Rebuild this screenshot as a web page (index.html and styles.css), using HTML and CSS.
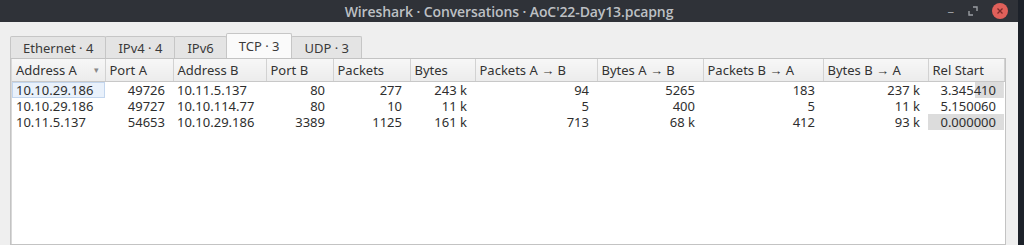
FILE: index.html
```html
<!DOCTYPE html>
<html lang="en">
<head>
  <meta charset="UTF-8">
  <title>Wireshark · Conversations · AoC'22-Day13.pcapng</title>
  <link rel="stylesheet" href="styles.css">
</head>
<body>

<div class="screen">
  <div class="window">
    <div class="titlebar">
      <span class="title">Wireshark · Conversations · AoC'22-Day13.pcapng</span>
      <div class="winbtns">
        <span class="btn-min">&ndash;</span>
        <svg class="btn-max" width="10" height="10" viewBox="0 0 10 10">
          <path d="M5 1h4v4M1 5v4h4" fill="none" stroke="#9a9da2" stroke-width="1.4"/>
        </svg>
        <span class="btn-close">
          <svg width="8" height="8" viewBox="0 0 8 8">
            <path d="M1.5 1.5l5 5M6.5 1.5l-5 5" stroke="#7a2a2a" stroke-width="1.3"/>
          </svg>
        </span>
      </div>
    </div>

    <div class="content">
      <div class="tabs">
        <div class="tab">Ethernet · 4</div>
        <div class="tab">IPv4 · 4</div>
        <div class="tab">IPv6</div>
        <div class="tab active">TCP · 3</div>
        <div class="tab">UDP · 3</div>
      </div>

      <div class="frame">
        <table class="conv">
          <colgroup>
            <col style="width:93px"><col style="width:68px"><col style="width:93px">
            <col style="width:67px"><col style="width:77px"><col style="width:65px">
            <col style="width:122px"><col style="width:106px"><col style="width:120px">
            <col style="width:105px"><col style="width:76px">
          </colgroup>
          <thead>
            <tr>
              <th class="sorted">Address A <span class="arrow">&#9662;</span></th>
              <th>Port A</th>
              <th>Address B</th>
              <th>Port B</th>
              <th>Packets</th>
              <th>Bytes</th>
              <th>Packets A → B</th>
              <th>Bytes A → B</th>
              <th>Packets B → A</th>
              <th>Bytes B → A</th>
              <th>Rel Start</th>
            </tr>
          </thead>
          <tbody id="rows"></tbody>
        </table>
      </div>
    </div>
  </div>
</div>

<script>
const rows = [
  ['10.10.29.186', '49726', '10.11.5.137', '80', '277', '243 k', '94', '5265', '183', '237 k', '3.345410', 38],
  ['10.10.29.186', '49727', '10.10.114.77', '80', '10', '11 k', '5', '400', '5', '11 k', '5.150060', 0],
  ['10.11.5.137', '54653', '10.10.29.186', '3389', '1125', '161 k', '713', '68 k', '412', '93 k', '0.000000', 100]
];
const alignLeft = [0, 2];
const tbody = document.getElementById('rows');

rows.forEach((r, i) => {
  const tr = document.createElement('tr');
  r.slice(0, 11).forEach((v, c) => {
    const td = document.createElement('td');
    td.textContent = v;
    if (!alignLeft.includes(c)) td.className = 'num';
    if (c === 0 && i === 0) td.classList.add('current');
    if (c === 10 && r[11] > 0) {
      td.classList.add('bar');
      td.style.backgroundSize = r[11] + '% 100%';
    }
    tr.appendChild(td);
  });
  tbody.appendChild(tr);
});
</script>

</body>
</html>
```

FILE: styles.css
```css
html, body {
  margin: 0;
  padding: 0;
  background: #1c2129;
}
body {
  font-family: 'Noto Sans', 'Open Sans', sans-serif;
  font-size: 13px;
  color: #333;
}
.screen {
  width: 1024px;
  height: 245px;
  overflow: hidden;
}
.window {
  width: 1018px;
  height: 245px;
  background: #efefef;
  display: flex;
  flex-direction: column;
}
.titlebar {
  height: 22px;
  background: #2f3238;
  display: flex;
  align-items: center;
  justify-content: center;
  position: relative;
}
.title {
  color: #bdc0c4;
  font-family: 'Open Sans', sans-serif;
  font-size: 14px;
  font-weight: 600;
  letter-spacing: -0.1px;
}
.winbtns {
  position: absolute;
  right: 10px;
  top: 3px;
  display: flex;
  align-items: center;
  gap: 14px;
}
.btn-min {
  color: #9a9da2;
  font-size: 13px;
  line-height: 16px;
}
.btn-close {
  width: 16px;
  height: 16px;
  border-radius: 50%;
  background: #e0605a;
  display: flex;
  align-items: center;
  justify-content: center;
}
.content {
  flex: 1;
  padding: 11px 10px 0 10px;
  display: flex;
  flex-direction: column;
}
.tabs {
  display: flex;
  align-items: flex-end;
  height: 25px;
}
.tab {
  flex-shrink: 0;
  height: 22px;
  line-height: 22px;
  padding: 0 12px;
  background: #e4e4e4;
  border: 1px solid #c6c6c6;
  border-bottom: none;
  margin-right: -1px;
  font-size: 13px;
  color: #3a3a3a;
  box-sizing: border-box;
  border-radius: 2px 2px 0 0;
  white-space: nowrap;
}
.tab.active {
  height: 25px;
  line-height: 25px;
  background: #fafafa;
  position: relative;
  z-index: 1;
}
.frame {
  flex: 1;
  width: 996px;
  background: #fff;
  border: 1px solid #c3c3c3;
  box-shadow: inset 1px 0 0 #d8d8d8;
  padding-left: 1px;
  box-sizing: border-box;
  overflow: hidden;
}
.conv {
  border-collapse: collapse;
  table-layout: fixed;
  width: 992px;
}
.conv th {
  height: 22px;
  padding: 0 4px;
  text-align: left;
  font-weight: normal;
  font-size: 13px;
  color: #333;
  background: linear-gradient(#f7f7f7, #ececec);
  border-right: 1px solid #d2d2d2;
  border-bottom: 1px solid #c8c8c8;
  white-space: nowrap;
  overflow: hidden;
}
.conv th.sorted {
  position: relative;
}
.arrow {
  position: absolute;
  right: 6px;
  top: 4px;
  font-size: 9px;
  color: #888;
}
.conv td {
  height: 16px;
  line-height: 16px;
  padding: 0 4px;
  font-size: 13px;
  color: #2e2e2e;
  white-space: nowrap;
  overflow: hidden;
}
.conv td.num {
  text-align: right;
  padding-right: 8px;
}
.conv td.current {
  background: #e9f1fb;
  box-shadow: inset 0 0 0 1px #c3d6ee;
}
.conv td.bar {
  background-image: linear-gradient(#dcdcdc, #dcdcdc);
  background-repeat: no-repeat;
  background-position: right top;
}
```
